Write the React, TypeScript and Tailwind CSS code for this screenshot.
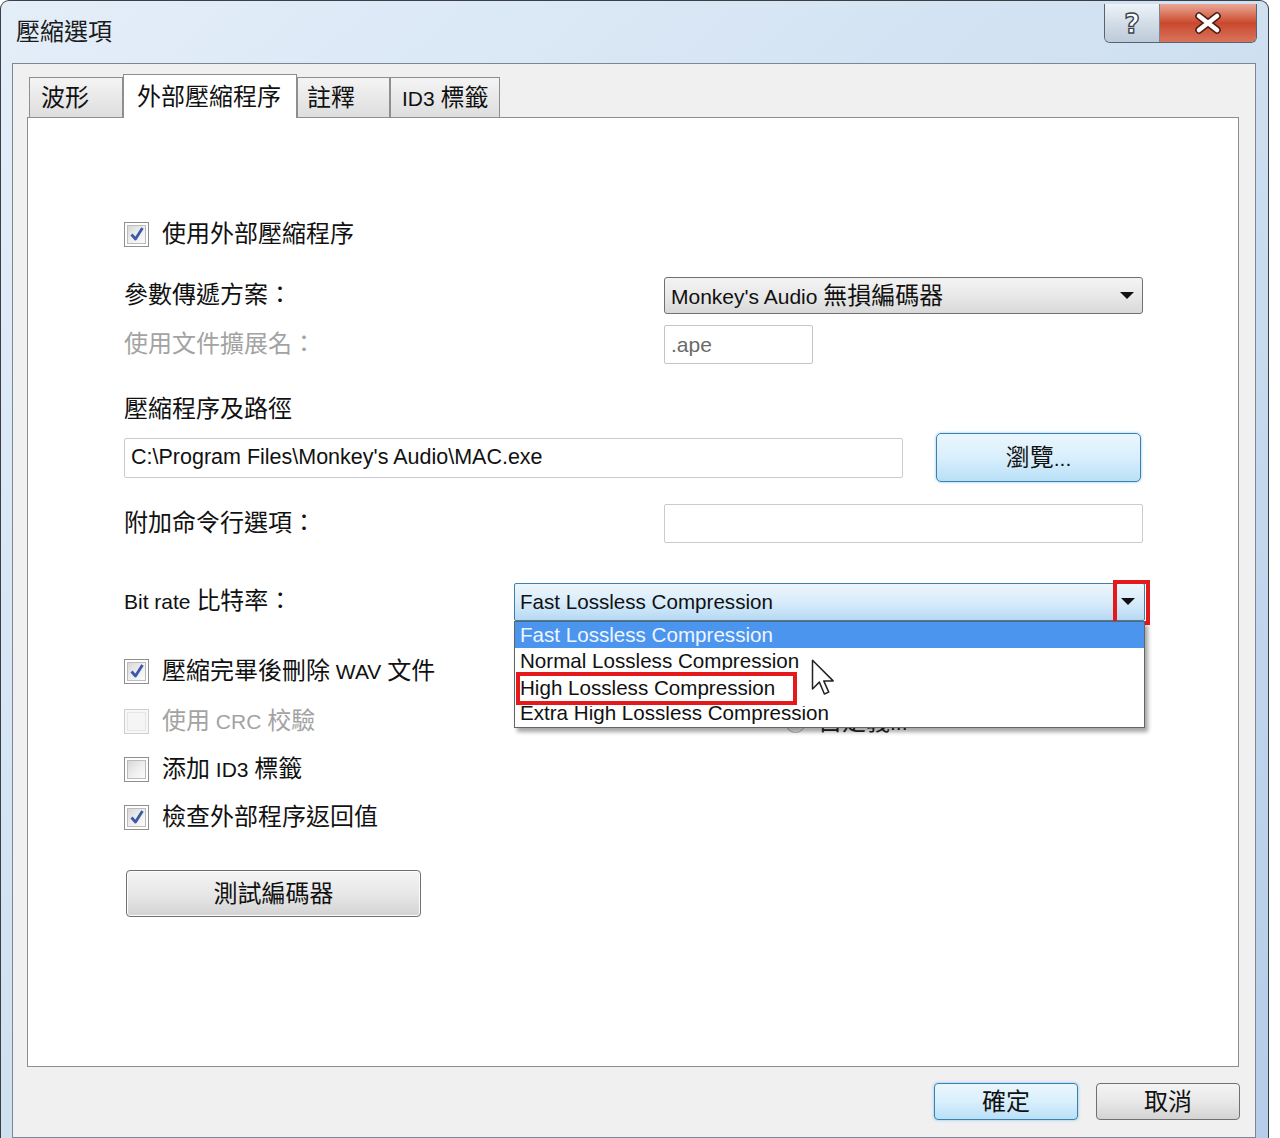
import React from 'react';

const CJK = /([\u2E80-\u9FFF\uF900-\uFAFF\uFF00-\uFFEF\u3000-\u303F]+)/;

// mixed text: CJK runs are drawn a little larger than the latin runs, as in the dialog font
const Txt: React.FC<{ children: string; className?: string }> = ({ children, className = '' }) => {
  const parts = children.split(CJK).filter(Boolean);
  return (
    <span className={`whitespace-pre leading-none ${className}`}>
      {parts.map((p, i) =>
        CJK.test(p) ? (
          <span key={i} className="text-[24px]">{p}</span>
        ) : (
          <span key={i}>{p}</span>
        )
      )}
    </span>
  );
};

const Arrow = () => (
  <svg width="14" height="8" viewBox="0 0 14 8">
    <path d="M0 0 H14 L7 7 Z" fill="#111" />
  </svg>
);

const CheckBox: React.FC<{ label: string; checked?: boolean; disabled?: boolean }> = ({ label, checked, disabled }) => (
  <div className="flex h-[26px] items-center">
    <div className={`h-[25px] w-[25px] border p-[2px] ${disabled ? 'border-[#cfcfcf] bg-[#f7f7f7]' : 'border-[#8f8f8f] bg-white'}`}>
      <div
        className={`flex h-full w-full items-center justify-center border ${
          disabled ? 'border-[#e6e6e6] bg-[#f5f5f5]' : 'border-[#bcbcbc] bg-gradient-to-br from-[#d8d8d8] via-[#eeeeee] to-[#fbfbfb]'
        }`}
      >
        {checked && (
          <svg width="16" height="16" viewBox="0 0 16 16">
            <path d="M2.5 8.5 L6.5 13 L13.5 2" stroke="#3d5aa9" strokeWidth="2.8" fill="none" strokeLinejoin="round" />
          </svg>
        )}
      </div>
    </div>
    <Txt className={`ml-[13px] ${disabled ? 'text-[#a3a3a3]' : 'text-[#111]'}`}>{label}</Txt>
  </div>
);

const Tab: React.FC<{ label: string; w: string; active?: boolean; pl?: string }> = ({ label, w, active, pl = 'pl-[11px]' }) => (
  <div
    className={`flex items-center border border-b-0 border-[#8c8e94] ${w} ${pl} ${
      active ? 'h-[44px] bg-white' : 'mb-px h-[40px] bg-gradient-to-b from-[#f4f4f4] to-[#dedede]'
    }`}
  >
    <Txt className="text-[#111]">{label}</Txt>
  </div>
);

const ListRow: React.FC<{ label: string; h: string; shift?: string; hl?: boolean; children?: React.ReactNode }> = ({ label, h, shift = '', hl, children }) => (
  <div className={`relative overflow-hidden ${h} ${hl ? 'bg-[#4c95ee] text-[#eef5ff]' : 'bg-white text-[#111]'}`}>
    <div className={`pl-[5px] text-[20.6px] leading-[26px] whitespace-pre ${shift}`}>{label}</div>
    {children}
  </div>
);

export default function App() {
  return (
    <div className="relative h-[1138px] w-[1280px] overflow-hidden bg-white font-['Liberation_Sans','Noto_Sans_CJK_TC',sans-serif] text-[21px] text-[#111]">
      {/* window */}
      <div className="flex h-[1138px] w-[1269px] flex-col rounded-t-[9px] border border-b-0 border-[#3a3f45] bg-gradient-to-br from-[#e4eef9] via-[#cfe0f1] to-[#b5cde8]">
        {/* title bar */}
        <div className="flex h-[62px] items-start justify-between">
          <div className="flex h-[62px] items-center pl-[15px]">
            <Txt className="text-[#1b1b1b]">壓縮選項</Txt>
          </div>
          <div className="mr-[11px] mt-[3px] flex h-[39px] overflow-hidden rounded-b-[6px] border border-t-0 border-[#59636e]">
            <div className="flex w-[55px] items-center justify-center border-r border-[#7a8693] bg-gradient-to-b from-[#eef3f8] via-[#d3dde8] to-[#bccad9]">
              <span className="font-['DejaVu_Sans',sans-serif] text-[27px] font-bold leading-none text-white [-webkit-text-stroke:1.4px_#3b4450]">?</span>
            </div>
            <div className="flex w-[96px] items-center justify-center bg-gradient-to-b from-[#e9a796] via-[#c9482c] to-[#d9735c]">
              <svg width="30" height="22" viewBox="0 0 30 22">
                <path d="M6 4 L24 18 M24 4 L6 18" stroke="#4a1a10" strokeWidth="7.5" strokeLinecap="round" />
                <path d="M6 4 L24 18 M24 4 L6 18" stroke="#fff" strokeWidth="4.6" strokeLinecap="round" />
              </svg>
            </div>
          </div>
        </div>

        {/* client area */}
        <div className="ml-[11px] flex w-[1244px] flex-1 flex-col border border-[#7b8793] bg-[#f0f0f0] pl-[14px]">
          {/* tabs */}
          <div className="relative z-10 -mb-px mt-[10px] flex items-end pl-[2px]">
            <Tab label="波形" w="w-[94px]" />
            <Tab label="外部壓縮程序" w="w-[174px]" active pl="pl-[13px]" />
            <Tab label="註釋" w="w-[93px]" pl="pl-[9px]" />
            <Tab label="ID3 標籤" w="w-[110px]" />
          </div>

          {/* tab panel */}
          <div className="flex h-[950px] w-[1212px] flex-col border border-[#8c8e94] bg-white pl-[96px] pt-[103px]">
            <CheckBox label="使用外部壓縮程序" checked />

            <div className="mt-[30px] flex h-[37px] items-center">
              <div className="w-[540px]">
                <Txt>參數傳遞方案：</Txt>
              </div>
              <div className="flex h-[37px] w-[479px] items-center justify-between rounded-[3px] border border-[#707070] bg-gradient-to-b from-[#f3f3f3] via-[#e9e9e9] to-[#d9d9d9] pl-[6px] pr-[8px]">
                <Txt>Monkey's Audio 無損編碼器</Txt>
                <Arrow />
              </div>
            </div>

            <div className="mt-[11px] flex h-[39px] items-center">
              <div className="w-[540px]">
                <Txt className="text-[#a3a3a3]">使用文件擴展名：</Txt>
              </div>
              <div className="flex h-[39px] w-[149px] items-center rounded-[2px] border border-[#c3c5cb] bg-white pl-[6px] text-[#6a6a6a]">
                <span className="leading-none">.ape</span>
              </div>
            </div>

            <div className="mt-[32px] flex h-[26px] items-center">
              <Txt>壓縮程序及路徑</Txt>
            </div>

            <div className="mt-[11px] flex h-[49px] items-center">
              <div className="flex h-[40px] w-[779px] items-center rounded-[2px] border border-[#c9cbd0] bg-white pl-[6px]">
                <span className="whitespace-pre text-[21.5px] leading-none">C:\Program Files\Monkey's Audio\MAC.exe</span>
              </div>
              <div className="ml-[33px] flex h-[49px] w-[205px] items-center justify-center rounded-[5px] border border-[#3c7fb1] bg-gradient-to-b from-[#eaf6fd] via-[#d9effc] to-[#b9e0f7] shadow-[0_0_3px_#7cc0ec]">
                <Txt>瀏覽...</Txt>
              </div>
            </div>

            <div className="mt-[22px] flex h-[39px] items-center">
              <div className="w-[540px]">
                <Txt>附加命令行選項：</Txt>
              </div>
              <div className="h-[39px] w-[479px] rounded-[2px] border border-[#c9cbd0] bg-white" />
            </div>

            <div className="mt-[40px] flex h-[38px] items-center">
              <div className="w-[390px]">
                <Txt>Bit rate 比特率：</Txt>
              </div>
              <div className="relative z-20 h-[38px] w-[631px]">
                <div className="flex h-[38px] items-center justify-between rounded-[2px] border border-[#3c7fb1] bg-gradient-to-b from-[#edf6fd] via-[#d8ecfb] to-[#b7d9f3] pl-[5px] pr-[9px]">
                  <span className="whitespace-pre text-[20.6px] leading-none">Fast Lossless Compression</span>
                  <Arrow />
                </div>
                <div className="absolute left-[599px] top-[-3px] h-[45px] w-[37px] border-4 border-[#e3191c]" />
                {/* drop-down list */}
                <div className="absolute left-0 top-[38px] w-[631px] border border-[#646464] bg-white shadow-[3px_4px_4px_rgba(0,0,0,0.35)]">
                  <ListRow label="Fast Lossless Compression" h="h-[26px]" hl />
                  <ListRow label="Normal Lossless Compression" h="h-[22px]" />
                  <ListRow label="High Lossless Compression" h="h-[36px]" shift="pt-[5px]">
                    <div className="absolute left-[1px] top-[2px] h-[33px] w-[281px] border-4 border-[#e3191c]" />
                  </ListRow>
                  <ListRow label="Extra High Lossless Compression" h="h-[21px]" shift="-mt-[6px]" />
                </div>
              </div>
            </div>

            <div className="mt-[37px]">
              <CheckBox label="壓縮完畢後刪除 WAV 文件" checked />
            </div>
            <div className="mt-[24px] flex items-center">
              <div className="w-[661px]">
                <CheckBox label="使用 CRC 校驗" disabled />
              </div>
              <div className="mt-[2px] flex items-center">
                <div className="h-[21px] w-[21px] rounded-full border border-[#a8a8a8] bg-gradient-to-br from-[#dcdcdc] to-[#f8f8f8]" />
                <Txt className="ml-[12px] text-[#222]">自定義...</Txt>
              </div>
            </div>
            <div className="mt-[22px]">
              <CheckBox label="添加 ID3 標籤" />
            </div>
            <div className="mt-[22px]">
              <CheckBox label="檢查外部程序返回值" checked />
            </div>

            <div className="ml-[2px] mt-[40px] flex h-[47px] w-[295px] items-center justify-center rounded-[4px] border border-[#707070] bg-gradient-to-b from-[#f4f4f4] via-[#e8e8e8] to-[#d3d3d3] shadow-[inset_0_0_0_1px_#fcfcfc]">
              <Txt>測試編碼器</Txt>
            </div>
          </div>

          {/* dialog buttons */}
          <div className="mt-[16px] flex w-[1213px] justify-end gap-[18px]">
            <div className="flex h-[37px] w-[144px] items-center justify-center rounded-[4px] border border-[#3c7fb1] bg-gradient-to-b from-[#eaf6fd] via-[#d9effc] to-[#b9e0f7] shadow-[0_0_3px_#7cc0ec]">
              <Txt>確定</Txt>
            </div>
            <div className="flex h-[37px] w-[144px] items-center justify-center rounded-[4px] border border-[#707070] bg-gradient-to-b from-[#f4f4f4] via-[#e8e8e8] to-[#d3d3d3]">
              <Txt>取消</Txt>
            </div>
          </div>
        </div>
      </div>

      {/* mouse pointer */}
      <svg className="absolute left-[811px] top-[659px] z-30" width="28" height="40" viewBox="0 0 22 32">
        <path d="M1 1 L1 24 L6.5 18.5 L10.5 28 L14 26.5 L10 17.5 L17.5 17.5 Z" fill="#fff" stroke="#222" strokeWidth="1.2" strokeLinejoin="round" />
      </svg>
    </div>
  );
}
